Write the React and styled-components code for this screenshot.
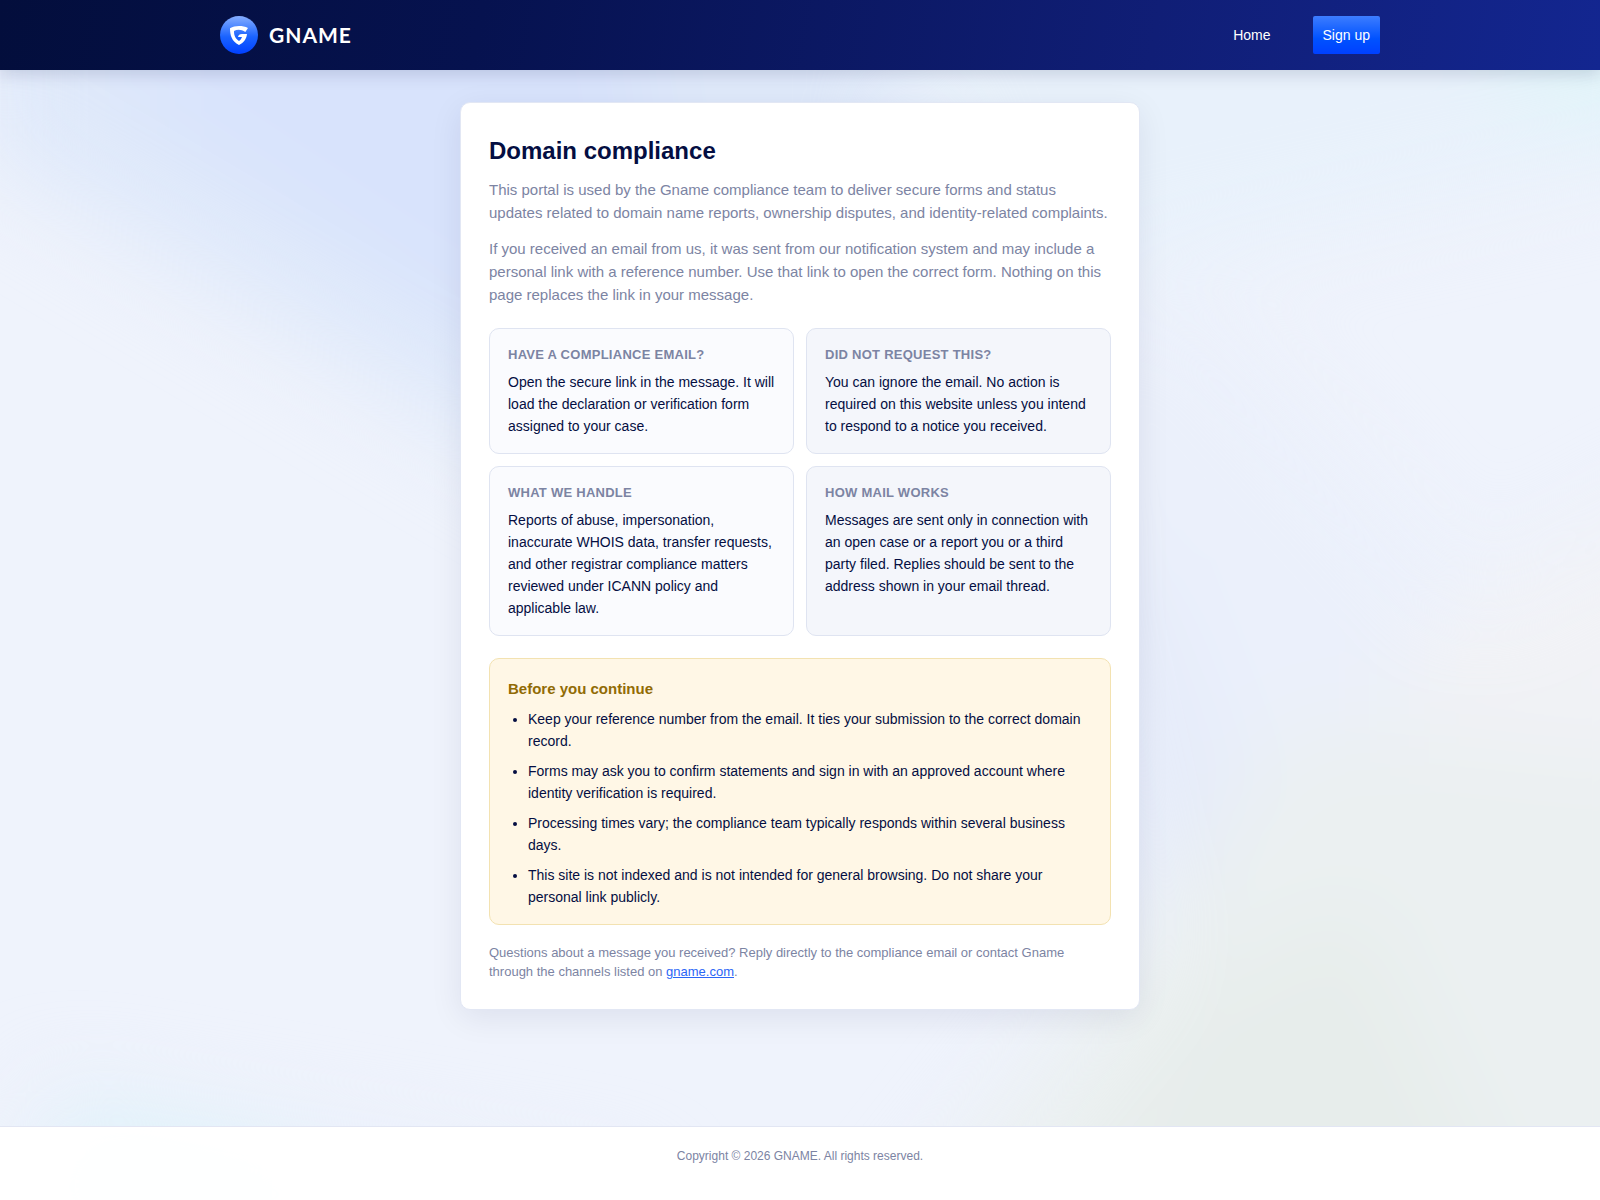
import styled, { createGlobalStyle } from "styled-components";

const GlobalStyle = createGlobalStyle`
	* {
		box-sizing: border-box;
	}

	body {
		margin: 0;
		background: #eff3fc;
		color: #040e42;
		font-family: "Liberation Sans", Arial, sans-serif;
		font-size: 14px;
		line-height: 22px;
	}
`;

const Page = styled.div`
	position: relative;
	isolation: isolate;
	display: flex;
	flex-direction: column;
	min-height: 100vh;
`;

const Backdrop = styled.svg`
	position: absolute;
	inset: 0;
	z-index: -1;
	width: 100%;
	height: 100%;
`;

const Header = styled.header`
	padding: 16px 20px;
	background: linear-gradient(100deg, #030e3c 0%, #06124f 30%, #101e76 72%, #132690 100%);
	box-shadow: 0 4px 16px rgba(4, 14, 66, 0.15);
`;

const HeaderInner = styled.div`
	display: flex;
	align-items: center;
	justify-content: space-between;
	max-width: 1160px;
	margin: 0 auto;
`;

const Brand = styled.a`
	display: flex;
	align-items: center;
	gap: 11px;
	color: #fff;
	font-family: Lato, sans-serif;
	font-size: 21px;
	font-weight: 700;
	letter-spacing: 1px;
	text-decoration: none;
`;

const Nav = styled.nav`
	display: flex;
	align-items: center;
	gap: 42px;
`;

const NavLink = styled.a`
	color: #fff;
	text-decoration: none;
`;

const SignUp = styled.button`
	padding: 8px 10px;
	border: 0;
	border-radius: 2px;
	background: linear-gradient(180deg, #3d7dff 0%, #0052ff 60%, #0040ff 100%);
	color: #fff;
	font: inherit;
	cursor: pointer;
`;

const Main = styled.main`
	flex: 1;
	padding: 32px 20px;
`;

const Card = styled.article`
	max-width: 680px;
	margin: 0 auto;
	padding: 28px;
	border: 1px solid #e2e7f4;
	border-radius: 10px;
	background: #fff;
	box-shadow: 0 8px 32px rgba(4, 14, 66, 0.08);
`;

const Title = styled.h1`
	margin: 0 0 7px;
	font-size: 24px;
	line-height: 40px;
`;

const Lead = styled.p`
	margin: 0 0 13px;
	color: #7c84a3;
	font-size: 15px;
	line-height: 23px;
`;

const TileGrid = styled.div`
	display: grid;
	grid-template-columns: 1fr 1fr;
	gap: 12px;
	margin: 22px 0;
`;

const Tile = styled.section`
	padding: 16px 18px;
	border: 1px solid #dfe4f1;
	border-radius: 10px;
	background: ${(props) => (props.$shaded ? "#f4f6fb" : "#fafbfe")};
`;

const TileTitle = styled.h2`
	margin: 0 0 6px;
	color: #7c84a3;
	font-size: 13px;
	line-height: 20px;
	letter-spacing: 0.02em;
	text-transform: uppercase;
`;

const TileText = styled.p`
	margin: 0;
`;

const Notice = styled.section`
	padding: 18px 18px 16px;
	border: 1px solid #f3e2b1;
	border-radius: 10px;
	background: #fff7e6;
`;

const NoticeTitle = styled.h2`
	margin: 0 0 8px;
	color: #916b05;
	font-size: 15px;
	line-height: 23px;
`;

const NoticeList = styled.ul`
	display: grid;
	gap: 8px;
	margin: 0;
	padding-left: 20px;
`;

const Contact = styled.p`
	margin: 18px 0 0;
	color: #7c84a3;
	font-size: 13px;
	line-height: 19px;

	a {
		color: #2b66f6;
	}
`;

const Footer = styled.footer`
	padding: 20px 20px 34px;
	border-top: 1px solid #e2e6f3;
	background: rgba(255, 255, 255, 0.97);
	color: #7c84a3;
	font-size: 12px;
	line-height: 19px;
	text-align: center;
`;

const tiles = [
	{
		title: "Have a compliance email?",
		text: "Open the secure link in the message. It will load the declaration or verification form assigned to your case.",
	},
	{
		title: "Did not request this?",
		text: "You can ignore the email. No action is required on this website unless you intend to respond to a notice you received.",
		shaded: true,
	},
	{
		title: "What we handle",
		text: "Reports of abuse, impersonation, inaccurate WHOIS data, transfer requests, and other registrar compliance matters reviewed under ICANN policy and applicable law.",
	},
	{
		title: "How mail works",
		text: "Messages are sent only in connection with an open case or a report you or a third party filed. Replies should be sent to the address shown in your email thread.",
		shaded: true,
	},
];

const notices = [
	"Keep your reference number from the email. It ties your submission to the correct domain record.",
	"Forms may ask you to confirm statements and sign in with an approved account where identity verification is required.",
	"Processing times vary; the compliance team typically responds within several business days.",
	"This site is not indexed and is not intended for general browsing. Do not share your personal link publicly.",
];

// soft colour fields behind the card
function PageBackdrop() {
	return (
		<Backdrop viewBox="0 0 1600 1200" preserveAspectRatio="none" aria-hidden="true">
			<defs>
				<filter id="soft" x="-50%" y="-50%" width="200%" height="200%" colorInterpolationFilters="sRGB">
					<feGaussianBlur stdDeviation="45" />
				</filter>
			</defs>
			<g filter="url(#soft)">
				<path d="M-20 -60H900L900 690L-20 150Z" fill="#dfe9fa" />
				<path d="M140 -60H620L700 480L140 110Z" fill="#d8e3fc" />
				<path d="M860 -60H1700V145L1000 300Z" fill="#e8f1fb" />
				<path d="M1470 -60H1700V120L1520 110Z" fill="#e0f4f9" />
				<path d="M1000 300L1200 300L1600 740V800L1150 900Z" fill="#ebf0fb" />
				<path d="M1040 560L1160 560L1260 820L1120 940Z" fill="#e6ecfa" />
				<path d="M1400 640L1700 480V900H1400Z" fill="#f1f2f6" />
				<path d="M880 1260L1100 980L1300 720L1700 760V1260Z" fill="#ebf0f1" />
				<path d="M1040 1260L1180 1000L1360 900L1530 1260Z" fill="#e7edeb" />
				<path d="M0 1260L50 1090L640 1190V1260Z" fill="#e9effb" />
				<path d="M50 1240L70 1110L300 1160V1240Z" fill="#dcf3f9" />
			</g>
		</Backdrop>
	);
}

function LogoMark() {
	return (
		<svg width="38" height="38" viewBox="0 0 114 114" aria-hidden="true">
			<defs>
				<linearGradient id="mark" x1="0" y1="0" x2="0" y2="1">
					<stop offset="0" stopColor="#86aeff" />
					<stop offset="0.55" stopColor="#1a63ff" />
					<stop offset="1" stopColor="#0040ff" />
				</linearGradient>
			</defs>
			<circle cx="57" cy="57" r="57" fill="url(#mark)" />
			<path
				d="M57 30C47 30 38 32 30 37C30 58 35 76 57 87C72 79 79 70 81 54H66C59 54 55 57 54 63H66C64 69 61 72 57 75C46 68 42 59 42 45C52 40 64 40 76 48L84 36C76 32 67 30 57 30Z"
				fill="#fff"
			/>
		</svg>
	);
}

function App() {
	return (
		<>
			<GlobalStyle />
			<Page>
				<PageBackdrop />
				<Header>
					<HeaderInner>
						<Brand href="#home">
							<LogoMark />
							GNAME
						</Brand>
						<Nav>
							<NavLink href="#home">Home</NavLink>
							<SignUp type="button">Sign up</SignUp>
						</Nav>
					</HeaderInner>
				</Header>

				<Main>
					<Card>
						<Title>Domain compliance</Title>
						<Lead>
							This portal is used by the Gname compliance team to deliver secure
							forms and status updates related to domain name reports, ownership
							disputes, and identity-related complaints.
						</Lead>
						<Lead>
							If you received an email from us, it was sent from our notification
							system and may include a personal link with a reference number. Use
							that link to open the correct form. Nothing on this page replaces
							the link in your message.
						</Lead>

						<TileGrid>
							{tiles.map((tile) => (
								<Tile key={tile.title} $shaded={tile.shaded}>
									<TileTitle>{tile.title}</TileTitle>
									<TileText>{tile.text}</TileText>
								</Tile>
							))}
						</TileGrid>

						<Notice>
							<NoticeTitle>Before you continue</NoticeTitle>
							<NoticeList>
								{notices.map((notice) => (
									<li key={notice}>{notice}</li>
								))}
							</NoticeList>
						</Notice>

						<Contact>
							Questions about a message you received? Reply directly to the
							compliance email or contact Gname through the channels listed on{" "}
							<a href="#gname">gname.com</a>.
						</Contact>
					</Card>
				</Main>

				<Footer>Copyright © 2026 GNAME. All rights reserved.</Footer>
			</Page>
		</>
	);
}

export default App;
